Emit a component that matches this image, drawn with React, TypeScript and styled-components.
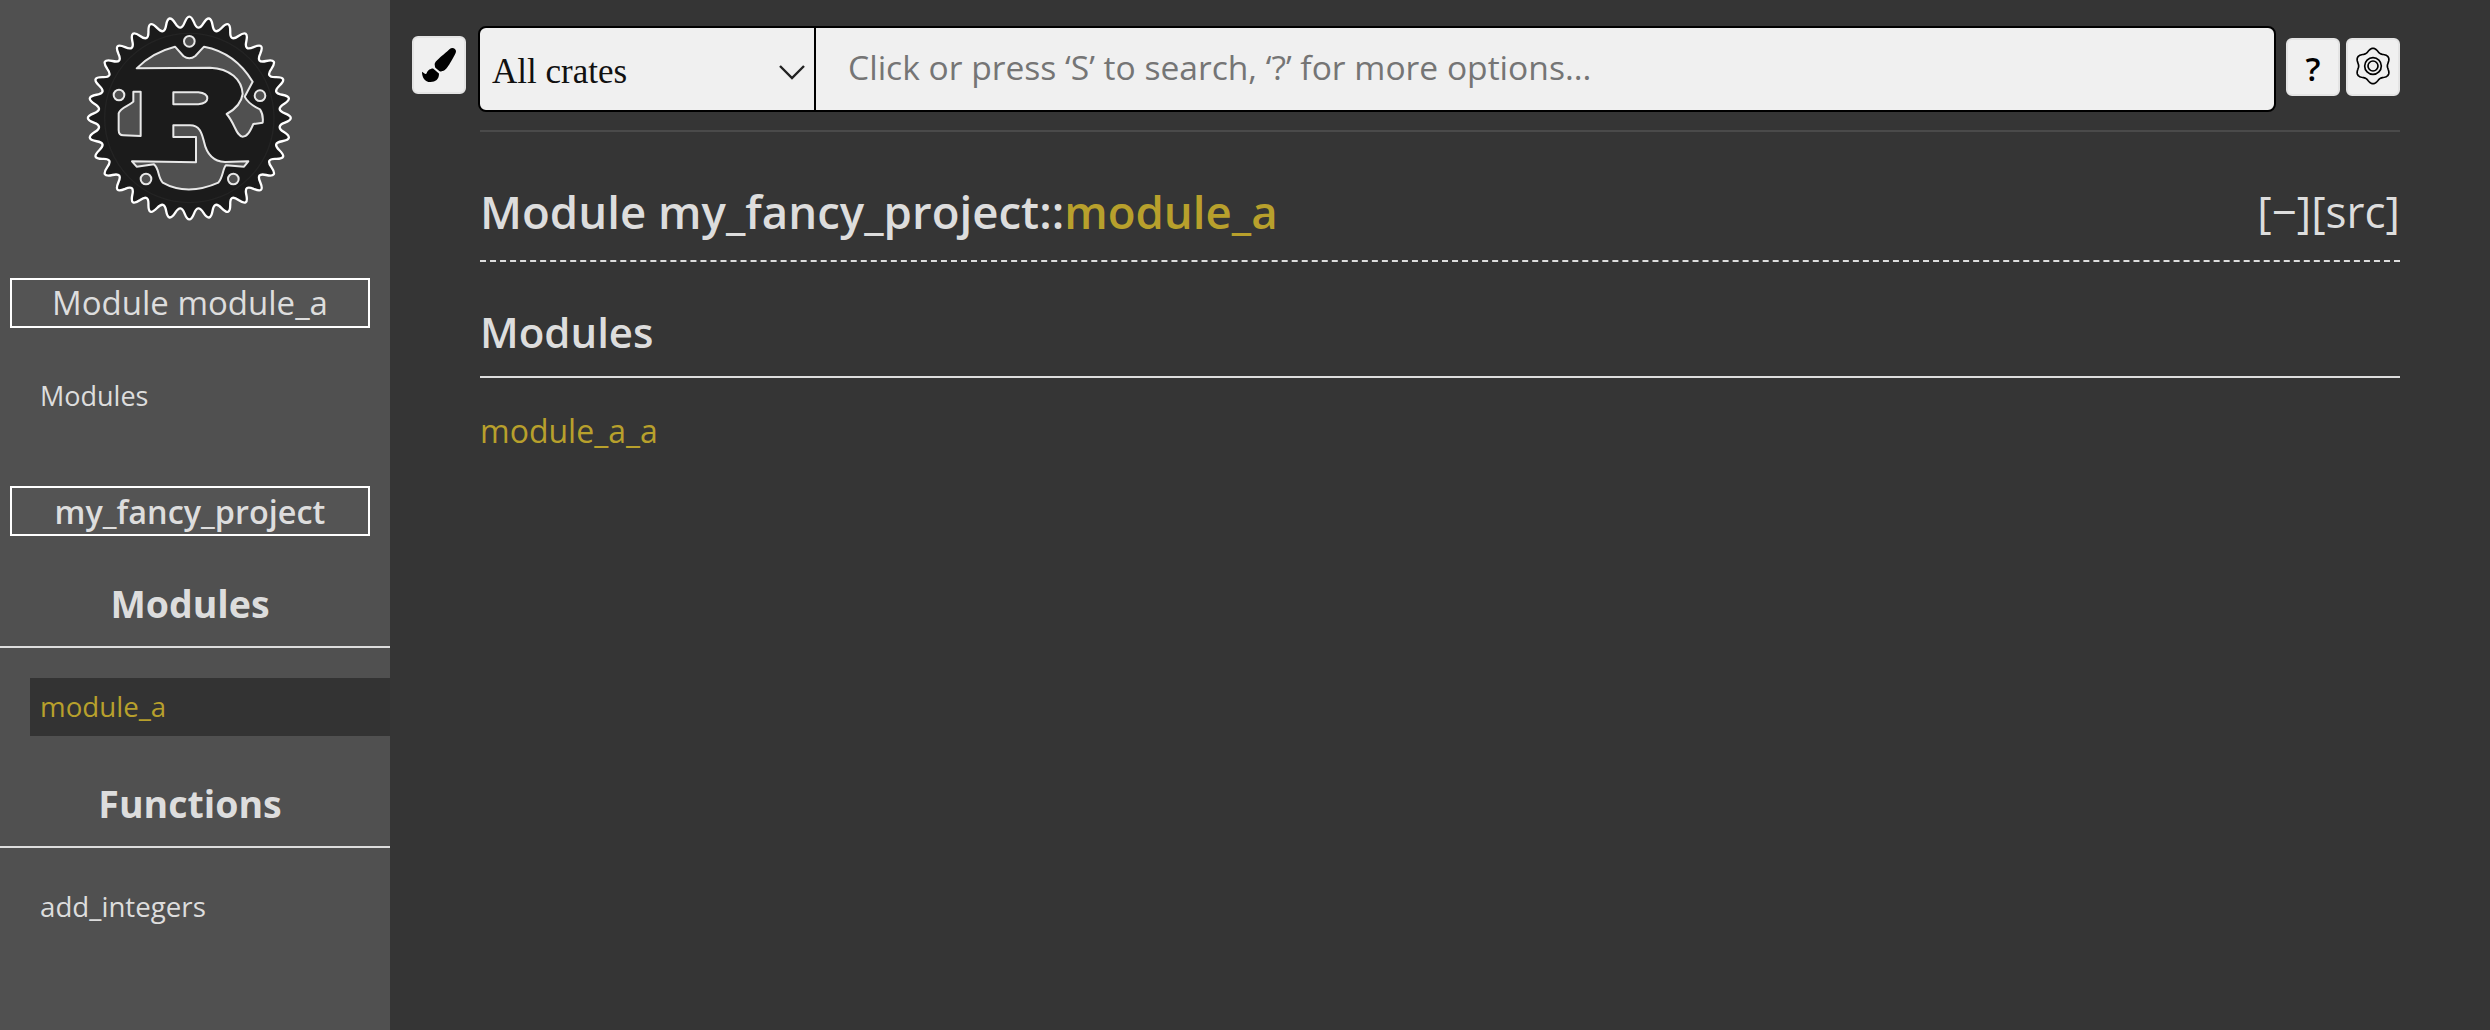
import React from 'react';
import styled, { createGlobalStyle } from 'styled-components';
import { FaPaintBrush } from 'react-icons/fa';

const GlobalStyle = createGlobalStyle`
  html, body {
    margin: 0;
    height: 100%;
    background: #353535;
  }
  #root {
    height: 100%;
  }
`;

const sans = `"Open Sans", "Noto Sans", sans-serif`;

const Page = styled.div`
  display: flex;
  height: 1030px;
  overflow: hidden;
  font-family: ${sans};
  color: #ddd;
`;

const Sidebar = styled.nav`
  flex: 0 0 390px;
  display: flex;
  flex-direction: column;
  background: #505050;
`;

const LogoWrap = styled.div`
  display: flex;
  justify-content: center;
  height: 230px;
  margin-bottom: 48px;
  padding-right: 10px;
`;

const LocationBox = styled.div<{ $bold?: boolean }>`
  box-sizing: border-box;
  height: 50px;
  margin: 0 20px 0 10px;
  border: 2px solid #fff;
  display: flex;
  align-items: center;
  justify-content: center;
  padding-bottom: 1px;
  font-size: ${p => (p.$bold ? 32.4 : 33)}px;
  font-weight: ${p => (p.$bold ? 600 : 400)};
  background: #545454;
`;

const SideBlock = styled.div`
  box-sizing: border-box;
  height: 158px;
  padding: 49px 0 0 40px;
  font-size: 27px;
  line-height: 38px;
`;

const SideHeading = styled.h3`
  box-sizing: border-box;
  margin: 0 0 30px;
  height: 112px;
  padding: 25px 10px 0 0;
  display: flex;
  align-items: center;
  justify-content: center;
  font-size: 37.5px;
  font-weight: 700;
  border-bottom: 2px solid #ddd;
`;

const SideLink = styled.a<{ $current?: boolean }>`
  display: block;
  box-sizing: border-box;
  height: 58px;
  line-height: 56px;
  padding-left: 10px;
  margin-left: 30px;
  font-size: 27.7px;
  color: ${p => (p.$current ? '#b8a02c' : '#ddd')};
  background: ${p => (p.$current ? '#333' : 'transparent')};
`;

const Main = styled.main`
  flex: 1;
  min-width: 0;
  padding: 26px 90px 0 22px;
`;

const Toolbar = styled.div`
  display: flex;
  align-items: flex-start;
  padding-bottom: 18px;
`;

const ToolButton = styled.button<{ $top: number; $left: number }>`
  box-sizing: border-box;
  width: 54px;
  height: 58px;
  margin: ${p => p.$top}px 0 0 ${p => p.$left}px;
  padding: 0;
  display: flex;
  align-items: center;
  justify-content: center;
  flex: none;
  background: #f0f0f0;
  border: 2px solid #e4e4e4;
  border-radius: 6px;
  color: #000;
  font-family: ${sans};
  font-size: 33px;
  font-weight: 600;
`;

const QuestionMark = styled.span`
  margin-top: 3px;
`;

const WheelSvg = styled.svg`
  margin-bottom: 3px;
`;

const SearchBox = styled.div`
  box-sizing: border-box;
  flex: 1;
  height: 86px;
  margin-left: 12px;
  display: flex;
  align-items: stretch;
  background: #f0f0f0;
  border: 2px solid #000;
  border-radius: 8px;
`;

const CrateSelect = styled.div`
  box-sizing: border-box;
  flex: 0 0 336px;
  display: flex;
  align-items: center;
  justify-content: space-between;
  padding: 6px 8px 0 12px;
  border-right: 2px solid #000;
  color: #111;
  font-family: "Liberation Serif", serif;
  font-size: 35px;
`;

const Placeholder = styled.div`
  flex: 1;
  display: flex;
  align-items: center;
  padding: 0 0 4px 32px;
  color: #757575;
  font-size: 33.6px;
`;

const Content = styled.div`
  margin-left: 68px;
  border-top: 2px solid #4a4a4a;
`;

const TitleRow = styled.div`
  box-sizing: border-box;
  height: 130px;
  padding-top: 30px;
  display: flex;
  align-items: center;
  justify-content: space-between;
  border-bottom: 2px dashed #ddd;
`;

const Title = styled.h1`
  margin: 0;
  font-size: 45.6px;
  font-weight: 600;
`;

const Accent = styled.span`
  color: #b8a02c;
`;

const OutOfBand = styled.span`
  font-size: 44px;
  font-weight: 400;
`;

const SectionHeading = styled.h2`
  box-sizing: border-box;
  margin: 0;
  height: 116px;
  padding-top: 24px;
  display: flex;
  align-items: center;
  font-size: 42px;
  font-weight: 600;
  border-bottom: 2px solid #ddd;
`;

const ModuleLink = styled.a`
  display: block;
  margin-top: 31px;
  font-size: 32px;
  color: #b8a02c;
`;

// gear outline of the logo, in the coordinates of the 720x690 drawing
const gearPath = (() => {
  const cx = 358;
  const cy = 354;
  const teeth = 32;
  const pt = (a: number, r: number) => `${(cx + r * Math.cos(a)).toFixed(1)} ${(cy + r * Math.sin(a)).toFixed(1)}`;
  const step = (Math.PI * 2) / teeth;
  let d = `M${pt(-step / 4, 287)}`;
  for (let i = 0; i < teeth; i++) {
    const a = i * step;
    d += `Q${pt(a, 322)} ${pt(a + step / 4, 287)}`;
    d += `Q${pt(a + step / 2, 258)} ${pt(a + (step * 3) / 4, 287)}`;
  }
  return d + 'Z';
})();

const wheelPath = (() => {
  const points: string[] = [];
  for (let i = 0; i < 120; i++) {
    const a = (i / 120) * Math.PI * 2;
    const r = 48 + 5 * Math.cos(6 * a);
    points.push(`${(60 + r * Math.cos(a - Math.PI / 2)).toFixed(1)} ${(60 + r * Math.sin(a - Math.PI / 2)).toFixed(1)}`);
  }
  return 'M' + points.join('L') + 'Z';
})();

const RustLogo = () => (
  <svg width="240" height="230" viewBox="0 0 720 690">
    <path d={gearPath} fill="#1b1b1b" stroke="#fff" strokeWidth="7" strokeLinejoin="round" />
    <circle cx="358" cy="354" r="254" fill="none" stroke="#242424" strokeWidth="4" />
    <g fill="#505050" stroke="#e8e8e8" strokeWidth="6" strokeLinejoin="round">
      <path d="M200 205C232 172 268 152 315 140L340 168Q358 182 376 168L402 140C465 152 515 190 548 245L524 290C532 306 548 318 570 328C578 340 580 352 578 368L550 372C540 395 532 410 518 410C498 408 496 372 470 342C492 330 514 310 518 282C516 240 480 205 420 203Z" />
      <path d="M212 275L190 275L190 305C178 318 152 322 146 340L146 390Q146 406 160 406L212 408Z" />
      <path d="M310 277L385 277Q412 280 412 295Q412 310 385 313L310 313Z" />
      <path d="M310 376L360 376C392 376 396 405 402 425C410 462 430 484 465 486L535 484L522 500L468 496C458 505 460 530 445 548C385 575 325 575 278 548C262 530 268 505 252 493L200 500L186 484L378 487L378 411L310 411Z" />
      <circle cx="358" cy="124" r="16" />
      <circle cx="147" cy="285" r="16" />
      <circle cx="570" cy="287" r="16" />
      <circle cx="228" cy="537" r="16" />
      <circle cx="490" cy="537" r="16" />
    </g>
  </svg>
);

const Chevron = () => (
  <svg width="28" height="16" viewBox="0 0 28 16">
    <path d="M2 2L14 14L26 2" fill="none" stroke="#222" strokeWidth="2.4" />
  </svg>
);

const WheelIcon = () => (
  <WheelSvg width="40" height="40" viewBox="0 0 120 120">
    <path d={wheelPath} fill="none" stroke="#000" strokeWidth="5" />
    <circle cx="60" cy="60" r="25" fill="none" stroke="#000" strokeWidth="5" />
    <circle cx="60" cy="60" r="15" fill="none" stroke="#000" strokeWidth="5" />
  </WheelSvg>
);

export default function App() {
  return (
    <Page>
      <GlobalStyle />
      <Sidebar>
        <LogoWrap>
          <RustLogo />
        </LogoWrap>
        <LocationBox>Module module_a</LocationBox>
        <SideBlock>Modules</SideBlock>
        <LocationBox $bold>my_fancy_project</LocationBox>
        <SideHeading>Modules</SideHeading>
        <SideLink $current>module_a</SideLink>
        <SideHeading>Functions</SideHeading>
        <SideLink>add_integers</SideLink>
      </Sidebar>
      <Main>
        <Toolbar>
          <ToolButton $top={10} $left={0}>
            <FaPaintBrush size={34} />
          </ToolButton>
          <SearchBox>
            <CrateSelect>
              All crates
              <Chevron />
            </CrateSelect>
            <Placeholder>Click or press ‘S’ to search, ‘?’ for more options...</Placeholder>
          </SearchBox>
          <ToolButton $top={12} $left={10}>
            <QuestionMark>?</QuestionMark>
          </ToolButton>
          <ToolButton $top={12} $left={6}>
            <WheelIcon />
          </ToolButton>
        </Toolbar>
        <Content>
          <TitleRow>
            <Title>
              Module my_fancy_project::<Accent>module_a</Accent>
            </Title>
            <OutOfBand>[−][src]</OutOfBand>
          </TitleRow>
          <SectionHeading>Modules</SectionHeading>
          <ModuleLink>module_a_a</ModuleLink>
        </Content>
      </Main>
    </Page>
  );
}
